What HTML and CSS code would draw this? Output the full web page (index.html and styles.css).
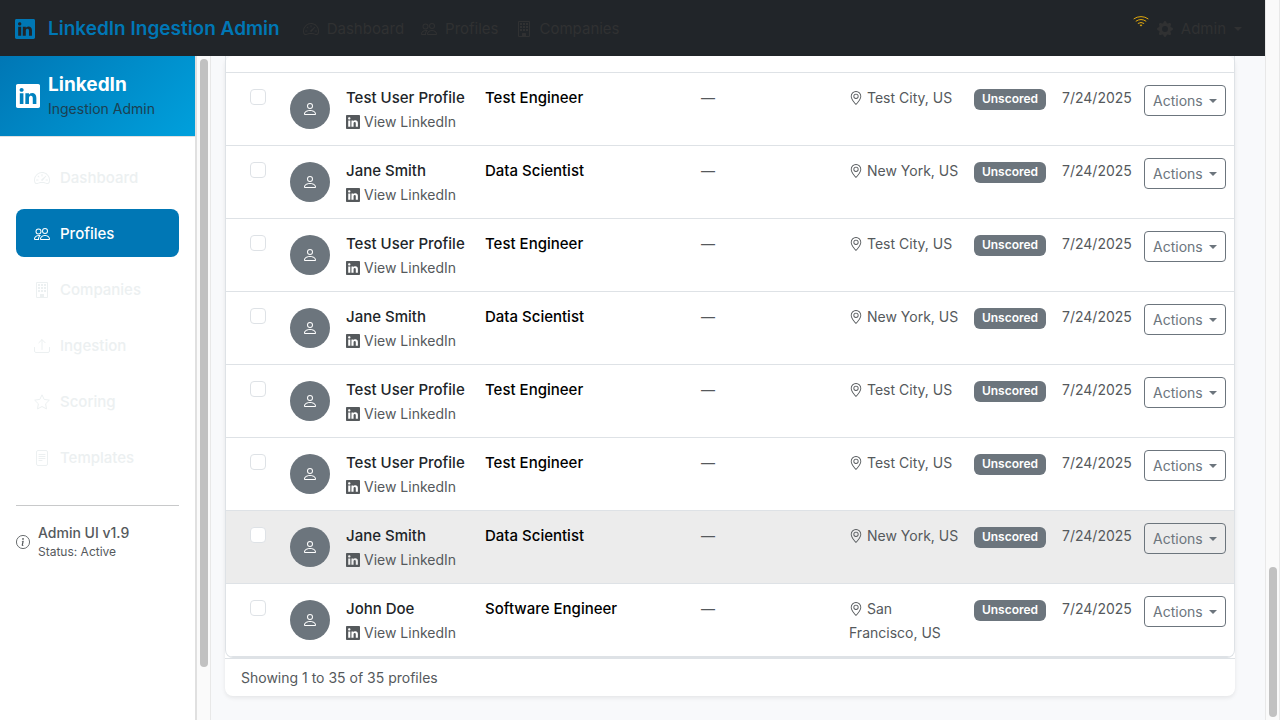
FILE: index.html
```html
<!DOCTYPE html>
<html lang="en">
<head>
<meta charset="utf-8">
<meta name="viewport" content="width=device-width, initial-scale=1">
<title>LinkedIn Ingestion Admin</title>
<link rel="stylesheet" href="styles.css">
</head>
<body>
<svg class="sprite" aria-hidden="true">
  <symbol id="linkedin" viewBox="0 0 16 16"><path d="M0 1.146C0 .513.526 0 1.175 0h13.65C15.474 0 16 .513 16 1.146v13.708c0 .633-.526 1.146-1.175 1.146H1.175C.526 16 0 15.487 0 14.854zm4.943 12.248V6.169H2.542v7.225zm-1.2-8.212c.837 0 1.358-.554 1.358-1.248-.015-.709-.52-1.248-1.342-1.248S2.4 3.226 2.4 3.934c0 .694.521 1.248 1.327 1.248zm4.908 8.212V9.359c0-.216.016-.432.08-.586.173-.431.568-.878 1.232-.878.869 0 1.216.662 1.216 1.634v3.865h2.401V9.25c0-2.22-1.184-3.252-2.764-3.252-1.274 0-1.845.7-2.165 1.193v.025h-.016l.016-.025V6.169h-2.4c.03.678 0 7.225 0 7.225z"/></symbol>
  <symbol id="person" viewBox="0 0 16 16"><path d="M8 8a3 3 0 1 0 0-6 3 3 0 0 0 0 6m2-3a2 2 0 1 1-4 0 2 2 0 0 1 4 0m4 8c0 1-1 1-1 1H3s-1 0-1-1 1-4 6-4 6 3 6 4m-1-.004c-.001-.246-.154-.986-.832-1.664C11.516 10.68 10.289 10 8 10s-3.516.68-4.168 1.332c-.678.678-.83 1.418-.832 1.664z"/></symbol>
  <symbol id="people" viewBox="0 0 16 16"><path d="M15 14s1 0 1-1-1-4-5-4-5 3-5 4 1 1 1 1zm-7.978-1L7 12.996c.001-.264.167-1.03.76-1.72C8.312 10.629 9.282 10 11 10c1.717 0 2.687.63 3.24 1.276.593.69.758 1.457.76 1.72l-.008.002-.014.002zM11 7a2 2 0 1 0 0-4 2 2 0 0 0 0 4m3-2a3 3 0 1 1-6 0 3 3 0 0 1 6 0M6.936 9.28a6 6 0 0 0-1.23-.247A7 7 0 0 0 5 9c-4 0-5 3-5 4q0 1 1 1h4.216A2.24 2.24 0 0 1 5 13c0-1.01.377-2.042 1.09-2.904.243-.294.526-.569.846-.816M4.92 10A5.5 5.5 0 0 0 4 13H1c0-.26.164-1.03.76-1.724.545-.636 1.492-1.256 3.16-1.275zM1.5 5.5a3 3 0 1 1 6 0 3 3 0 0 1-6 0m3-2a2 2 0 1 0 0 4 2 2 0 0 0 0-4"/></symbol>
  <symbol id="speed" viewBox="0 0 16 16"><path d="M8 4a.5.5 0 0 1 .5.5V6a.5.5 0 0 1-1 0V4.5A.5.5 0 0 1 8 4M3.732 5.732a.5.5 0 0 1 .707 0l.915.914a.5.5 0 1 1-.708.708l-.914-.915a.5.5 0 0 1 0-.707M2 10a.5.5 0 0 1 .5-.5h1.586a.5.5 0 0 1 0 1H2.5A.5.5 0 0 1 2 10m9.5 0a.5.5 0 0 1 .5-.5h1.5a.5.5 0 0 1 0 1H12a.5.5 0 0 1-.5-.5m.754-4.246a.39.39 0 0 0-.527-.02L7.547 9.31a.91.91 0 1 0 1.302 1.258l3.434-4.297a.39.39 0 0 0-.029-.518z"/><path d="M0 10a8 8 0 1 1 15.547 2.661c-.442 1.253-1.845 1.602-2.932 1.25C11.309 13.488 9.475 13 8 13c-1.474 0-3.31.488-4.615.911-1.087.352-2.49.003-2.932-1.25A8 8 0 0 1 0 10m8-7a7 7 0 0 0-6.603 9.329c.203.575.923.876 1.68.63C4.397 12.533 6.358 12 8 12s3.604.532 4.923.96c.757.245 1.477-.056 1.68-.631A7 7 0 0 0 8 3" fill-rule="evenodd"/></symbol>
  <symbol id="building" viewBox="0 0 16 16"><path fill-rule="evenodd" d="M3 0h10a1 1 0 0 1 1 1v14a1 1 0 0 1-1 1H3a1 1 0 0 1-1-1V1a1 1 0 0 1 1-1m0 1v14h3v-2.500a.5.5 0 0 1 .5-.5h3a.5.5 0 0 1 .5.5V15h3V1z"/><path d="M4 2h2v2H4zM7 2h2v2H7zM10 2h2v2h-2zM4 5h2v2H4zM7 5h2v2H7zM10 5h2v2h-2zM4 8h2v2H4zM7 8h2v2H7zM10 8h2v2h-2zM6.500 12.500h3V15h-3z"/></symbol>
  <symbol id="upload" viewBox="0 0 16 16"><path d="M.5 9.500v3.500a1.500 1.500 0 0 0 1.500 1.500h12a1.500 1.500 0 0 0 1.500-1.500V9.500M8 11.500V1.800M4.900 4.700 8 1.600l3.100 3.100" fill="none" stroke="currentColor" stroke-linecap="round" stroke-linejoin="round"/></symbol>
  <symbol id="star" viewBox="0 0 16 16"><path d="M8 .8l2.150 4.600 5.200.75-3.750 3.650.9 5.100L8 12.500l-4.500 2.400.9-5.100L.65 6.150l5.200-.75z" fill="none" stroke="currentColor" stroke-linejoin="round"/></symbol>
  <symbol id="file" viewBox="0 0 16 16"><rect x="2.500" y=".5" width="11" height="15" rx="1.500" fill="none" stroke="currentColor"/><path d="M5 4.500h6M5 6.500h6M5 8.500h6M5 10.500h3" fill="none" stroke="currentColor" stroke-linecap="round"/></symbol>
  <symbol id="info" viewBox="0 0 16 16"><circle cx="8" cy="8" r="7.500" fill="none" stroke="currentColor"/><path d="m8.930 6.588-2.290.287-.082.380.450.083c.294.070.352.176.288.469l-.738 3.468c-.194.897.105 1.319.808 1.319.545 0 1.178-.252 1.465-.598l.088-.416c-.2.176-.492.246-.686.246-.275 0-.375-.193-.304-.533z"/><circle cx="8" cy="4.500" r="1"/></symbol>
  <symbol id="pin" viewBox="0 0 16 16"><path d="M12.166 8.940c-.524 1.062-1.234 2.120-1.960 3.070A32 32 0 0 1 8 14.580a32 32 0 0 1-2.206-2.570c-.726-.95-1.436-2.008-1.960-3.070C3.304 7.867 3 6.862 3 6a5 5 0 0 1 10 0c0 .862-.305 1.867-.834 2.940M8 16s6-5.686 6-10A6 6 0 0 0 2 6c0 4.314 6 10 6 10"/><path d="M8 8a2 2 0 1 1 0-4 2 2 0 0 1 0 4m0 1a3 3 0 1 0 0-6 3 3 0 0 0 0 6"/></symbol>
  <symbol id="wifi" viewBox="0 0 16 16"><path d="M1 5.750a12 12 0 0 1 14 0M3.100 8.100a8.700 8.700 0 0 1 9.800 0M5.200 10.300a5.200 5.200 0 0 1 5.600 0" fill="none" stroke="currentColor" stroke-linecap="round"/><path d="M6.600 12.100a2.300 2.300 0 0 1 2.800 0L8 13.600z"/></symbol>
  <symbol id="gear" viewBox="0 0 16 16"><path d="M9.405 1.050c-.413-1.400-2.397-1.400-2.810 0l-.1.340a1.464 1.464 0 0 1-2.105.872l-.31-.17c-1.283-.698-2.686.705-1.987 1.987l.169.311c.446.820.023 1.841-.872 2.105l-.34.1c-1.400.413-1.400 2.397 0 2.810l.34.1a1.464 1.464 0 0 1 .872 2.105l-.17.31c-.698 1.283.705 2.686 1.987 1.987l.311-.169a1.464 1.464 0 0 1 2.105.872l.1.34c.413 1.400 2.397 1.400 2.810 0l.1-.34a1.464 1.464 0 0 1 2.105-.872l.31.17c1.283.698 2.686-.705 1.987-1.987l-.169-.311a1.464 1.464 0 0 1 .872-2.105l.34-.1c1.400-.413 1.400-2.397 0-2.810l-.34-.1a1.464 1.464 0 0 1-.872-2.105l.17-.31c.698-1.283-.705-2.686-1.987-1.987l-.311.169a1.464 1.464 0 0 1-2.105-.872zM8 10.930a2.929 2.929 0 1 1 0-5.860 2.929 2.929 0 0 1 0 5.860"/></symbol>
</svg>
<div class="window">
  <div class="app">
    <header class="topbar">
      <a class="brand" href="#"><svg class="icon icon-brand"><use href="#linkedin"/></svg>LinkedIn Ingestion Admin</a>
      <nav class="topnav">
        <a href="#"><svg class="icon"><use href="#speed"/></svg>Dashboard</a>
        <a href="#"><svg class="icon"><use href="#people"/></svg>Profiles</a>
        <a href="#"><svg class="icon"><use href="#building"/></svg>Companies</a>
      </nav>
      <div class="topbar-right">
        <svg class="icon wifi"><use href="#wifi"/></svg>
        <button class="admin" type="button"><svg class="icon"><use href="#gear"/></svg>Admin<span class="caret"></span></button>
      </div>
    </header>
    <div class="body">
      <aside class="sidebar">
        <div class="sidebar-inner">
          <div class="logo">
            <svg class="icon icon-logo"><use href="#linkedin"/></svg>
            <div><div class="logo-name">LinkedIn</div><div class="logo-sub">Ingestion Admin</div></div>
          </div>
          <nav class="sidenav">
            <a href="#"><svg class="icon"><use href="#speed"/></svg>Dashboard</a>
            <a href="#" class="active"><svg class="icon"><use href="#people"/></svg>Profiles</a>
            <a href="#"><svg class="icon"><use href="#building"/></svg>Companies</a>
            <a href="#"><svg class="icon"><use href="#upload"/></svg>Ingestion</a>
            <a href="#"><svg class="icon"><use href="#star"/></svg>Scoring</a>
            <a href="#"><svg class="icon"><use href="#file"/></svg>Templates</a>
          </nav>
          <div class="about">
            <svg class="icon icon-small"><use href="#info"/></svg>
            <div><div class="version">Admin UI v1.9</div><div class="status">Status: Active</div></div>
          </div>
        </div>
        <div class="scrollbar"><div class="thumb thumb-side"></div></div>
      </aside>
      <main class="main">
        <section class="card">
          <div class="table-wrap">
            <table class="profiles">
              <colgroup><col class="c-check"><col class="c-avatar"><col class="c-name"><col><col class="c-company"><col class="c-location"><col class="c-score"><col class="c-date"><col class="c-actions"></colgroup>
              <tbody>
                <tr class="lead"><td colspan="9"></td></tr>
                <tr><td><input type="checkbox" aria-label="Select Test User Profile"></td><td><span class="avatar"><svg class="icon"><use href="#person"/></svg></span></td><td class="text"><div class="name">Test User Profile</div><a class="view" href="#"><svg class="icon icon-small"><use href="#linkedin"/></svg>View LinkedIn</a></td><td class="text title">Test Engineer</td><td class="text muted">—</td><td class="text muted location"><svg class="icon icon-small"><use href="#pin"/></svg>Test City, US</td><td><span class="badge">Unscored</span></td><td class="text muted">7/24/2025</td><td><button class="actions" type="button">Actions<span class="caret"></span></button></td></tr>
                <tr><td><input type="checkbox" aria-label="Select Jane Smith"></td><td><span class="avatar"><svg class="icon"><use href="#person"/></svg></span></td><td class="text"><div class="name">Jane Smith</div><a class="view" href="#"><svg class="icon icon-small"><use href="#linkedin"/></svg>View LinkedIn</a></td><td class="text title">Data Scientist</td><td class="text muted">—</td><td class="text muted location"><svg class="icon icon-small"><use href="#pin"/></svg>New York, US</td><td><span class="badge">Unscored</span></td><td class="text muted">7/24/2025</td><td><button class="actions" type="button">Actions<span class="caret"></span></button></td></tr>
                <tr><td><input type="checkbox" aria-label="Select Test User Profile"></td><td><span class="avatar"><svg class="icon"><use href="#person"/></svg></span></td><td class="text"><div class="name">Test User Profile</div><a class="view" href="#"><svg class="icon icon-small"><use href="#linkedin"/></svg>View LinkedIn</a></td><td class="text title">Test Engineer</td><td class="text muted">—</td><td class="text muted location"><svg class="icon icon-small"><use href="#pin"/></svg>Test City, US</td><td><span class="badge">Unscored</span></td><td class="text muted">7/24/2025</td><td><button class="actions" type="button">Actions<span class="caret"></span></button></td></tr>
                <tr><td><input type="checkbox" aria-label="Select Jane Smith"></td><td><span class="avatar"><svg class="icon"><use href="#person"/></svg></span></td><td class="text"><div class="name">Jane Smith</div><a class="view" href="#"><svg class="icon icon-small"><use href="#linkedin"/></svg>View LinkedIn</a></td><td class="text title">Data Scientist</td><td class="text muted">—</td><td class="text muted location"><svg class="icon icon-small"><use href="#pin"/></svg>New York, US</td><td><span class="badge">Unscored</span></td><td class="text muted">7/24/2025</td><td><button class="actions" type="button">Actions<span class="caret"></span></button></td></tr>
                <tr><td><input type="checkbox" aria-label="Select Test User Profile"></td><td><span class="avatar"><svg class="icon"><use href="#person"/></svg></span></td><td class="text"><div class="name">Test User Profile</div><a class="view" href="#"><svg class="icon icon-small"><use href="#linkedin"/></svg>View LinkedIn</a></td><td class="text title">Test Engineer</td><td class="text muted">—</td><td class="text muted location"><svg class="icon icon-small"><use href="#pin"/></svg>Test City, US</td><td><span class="badge">Unscored</span></td><td class="text muted">7/24/2025</td><td><button class="actions" type="button">Actions<span class="caret"></span></button></td></tr>
                <tr><td><input type="checkbox" aria-label="Select Test User Profile"></td><td><span class="avatar"><svg class="icon"><use href="#person"/></svg></span></td><td class="text"><div class="name">Test User Profile</div><a class="view" href="#"><svg class="icon icon-small"><use href="#linkedin"/></svg>View LinkedIn</a></td><td class="text title">Test Engineer</td><td class="text muted">—</td><td class="text muted location"><svg class="icon icon-small"><use href="#pin"/></svg>Test City, US</td><td><span class="badge">Unscored</span></td><td class="text muted">7/24/2025</td><td><button class="actions" type="button">Actions<span class="caret"></span></button></td></tr>
                <tr class="hovered"><td><input type="checkbox" aria-label="Select Jane Smith"></td><td><span class="avatar"><svg class="icon"><use href="#person"/></svg></span></td><td class="text"><div class="name">Jane Smith</div><a class="view" href="#"><svg class="icon icon-small"><use href="#linkedin"/></svg>View LinkedIn</a></td><td class="text title">Data Scientist</td><td class="text muted">—</td><td class="text muted location"><svg class="icon icon-small"><use href="#pin"/></svg>New York, US</td><td><span class="badge">Unscored</span></td><td class="text muted">7/24/2025</td><td><button class="actions" type="button">Actions<span class="caret"></span></button></td></tr>
                <tr><td><input type="checkbox" aria-label="Select John Doe"></td><td><span class="avatar"><svg class="icon"><use href="#person"/></svg></span></td><td class="text"><div class="name">John Doe</div><a class="view" href="#"><svg class="icon icon-small"><use href="#linkedin"/></svg>View LinkedIn</a></td><td class="text title">Software Engineer</td><td class="text muted">—</td><td class="text muted location"><svg class="icon icon-small"><use href="#pin"/></svg>San Francisco, US</td><td><span class="badge">Unscored</span></td><td class="text muted">7/24/2025</td><td><button class="actions" type="button">Actions<span class="caret"></span></button></td></tr>
              </tbody>
            </table>
          </div>
          <footer class="card-footer">Showing 1 to 35 of 35 profiles</footer>
        </section>
      </main>
    </div>
  </div>
  <div class="scrollbar scrollbar-page"><div class="thumb thumb-page"></div></div>
</div>
</body>
</html>
```
FILE: styles.css
```css
* { box-sizing: border-box; }
body {
  margin: 0;
  background: #f8f9fa;
  color: #212529;
  font-family: Inter, "Liberation Sans", sans-serif;
  font-size: 15px;
  line-height: 24px;
}
a { color: inherit; text-decoration: none; }
button { font-family: inherit; background: none; cursor: pointer; }
.sprite { display: none; }
.icon { width: 16px; height: 16px; fill: currentColor; flex: none; }
.icon-small { width: 14px; height: 14px; }
.icon-brand { width: 20px; height: 20px; }
.icon-logo { width: 24px; height: 24px; }

.window { display: flex; height: 100vh; overflow: hidden; }
.app { flex: 1; min-width: 0; display: flex; flex-direction: column; }
.body { flex: 1; min-height: 0; display: flex; }

.topbar {
  display: flex;
  align-items: center;
  height: 56px;
  padding: 1px 23px 0 15px;
  background: #212529;
  color: #303132;
}
.brand {
  display: flex;
  align-items: center;
  gap: 13px;
  color: #0077b5;
  font-size: 19px;
  font-weight: 600;
}
.topnav { display: flex; gap: 17px; margin-left: 23px; }
.topnav a { display: flex; align-items: center; gap: 8px; }
.topbar-right { display: flex; align-items: center; gap: 8px; margin-left: auto; }
.wifi { color: #e0a80d; margin-bottom: 16px; }
.admin {
  display: flex;
  align-items: center;
  gap: 8px;
  padding: 0;
  border: 0;
  color: inherit;
  font-size: 15px;
}
.caret {
  display: inline-block;
  border: 4px solid transparent;
  border-top-color: currentColor;
  border-bottom: 0;
}

.sidebar { display: flex; width: 211px; flex: none; background: #fff; }
.sidebar-inner { flex: 1; border-right: 2px solid #e0e0e0; }
.logo {
  display: flex;
  align-items: center;
  gap: 8px;
  height: 80px;
  padding: 0 16px;
  color: #fff;
  background: linear-gradient(135deg, #0077b5, #00a0dc);
}
.logo-name { padding-top: 1px; font-size: 19px; font-weight: 700; }
.logo-sub { color: #1c4052; font-size: 14px; }
.sidenav {
  display: flex;
  flex-direction: column;
  gap: 8px;
  padding: 16px;
  border-top: 1px solid #e0e0e0;
  color: #ecf0f1;
}
.sidenav a {
  display: flex;
  align-items: center;
  gap: 10px;
  height: 48px;
  padding: 1px 18px 0;
  border-radius: 8px;
  font-weight: 500;
}
.sidenav .active { background: #0077b5; color: #fff; }
.about {
  display: flex;
  align-items: center;
  gap: 8px;
  margin: 8px 16px 0;
  padding-top: 17px;
  border-top: 1px solid #c8c9ca;
  color: #55595c;
}
.version { font-size: 14px; line-height: 20px; font-weight: 500; }
.status { font-size: 12px; line-height: 17px; }

.scrollbar {
  display: flex;
  flex-direction: column;
  align-items: center;
  width: 14px;
  padding-top: 3px;
  background: #fafafa;
  border-right: 1px solid #e8e8e8;
}
.scrollbar-page {
  justify-content: flex-end;
  width: 15px;
  padding-bottom: 3px;
  border-left: 1px solid #e8e8e8;
}
.thumb { width: 8px; border-radius: 4px; background: #c1c1c1; }
.thumb-side { height: 92%; }
.thumb-page { height: 21%; }

.main { flex: 1; min-width: 0; padding: 0 30px 24px 14px; background: #f8f9fb; }
.card { border-radius: 8px; background: #fff; box-shadow: 0 2px 4px rgba(0, 0, 0, .08); }
.table-wrap {
  border: 1px solid #dee2e6;
  border-top: 0;
  border-radius: 0 0 8px 8px;
  overflow: hidden;
}
.profiles { width: 100%; table-layout: fixed; border-collapse: separate; border-spacing: 0; }
.c-check, .c-avatar { width: 56px; }
.c-name { width: 139px; }
.c-company { width: 148px; }
.c-location { width: 125px; }
.c-score { width: 88px; }
.c-date { width: 82px; }
.c-actions { width: 98px; }
.profiles td { padding: 12px 8px; vertical-align: top; border-bottom: 1px solid #dee2e6; }
.profiles .text { padding-top: 13px; padding-bottom: 11px; }
.profiles .location { padding-right: 2px; }
.profiles .lead td { height: 17px; padding: 0; }
.hovered { background: #ececec; }
.profiles input {
  display: block;
  appearance: none;
  width: 16px;
  height: 16px;
  margin: 4px 0 0 16px;
  border: 1px solid #dee2e6;
  border-radius: 4px;
  background: #fff;
}
.avatar {
  display: flex;
  align-items: center;
  justify-content: center;
  width: 40px;
  height: 40px;
  margin-top: 4px;
  border-radius: 50%;
  background: #6c757d;
  color: #fff;
}
.name { font-weight: 500; white-space: nowrap; }
.view { display: flex; align-items: center; gap: 4px; color: #55595c; font-size: 14px; }
.title { color: #000; font-weight: 500; }
.muted { color: #55595c; font-size: 14px; }
.muted .icon { margin-right: 4px; vertical-align: -2px; }
.badge {
  display: block;
  width: 72px;
  margin-top: 4px;
  padding: 2px 0 3px;
  border-radius: 6px;
  background: #6c757d;
  color: #fff;
  font-size: 12px;
  line-height: 16px;
  font-weight: 600;
  text-align: center;
}
.actions {
  display: flex;
  align-items: center;
  justify-content: space-between;
  width: 82px;
  height: 31px;
  padding: 0 8px;
  border: 1px solid #6c757d;
  border-radius: 4px;
  color: #6c757d;
  font-size: 14px;
}
.card-footer {
  padding: 7px 16px 6px;
  border-top: 1px solid #dee2e6;
  color: #55595c;
  font-size: 14px;
}
```
